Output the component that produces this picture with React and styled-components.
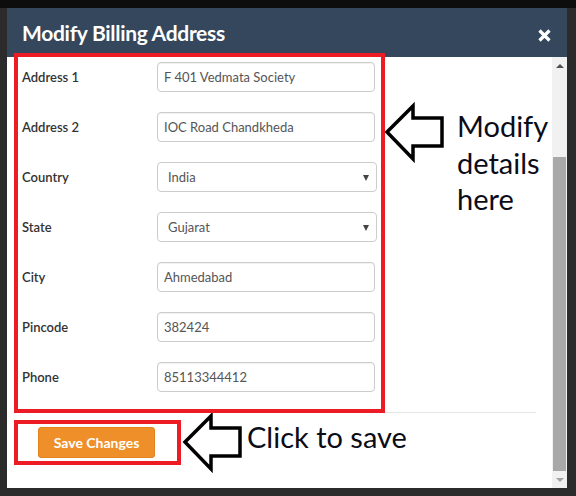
import styled, { createGlobalStyle } from 'styled-components';

const GlobalStyle = createGlobalStyle`
  html, body {
    margin: 0;
    padding: 0;
    background: #2b2b2b;
  }
  * {
    box-sizing: border-box;
  }
`;

const Screen = styled.div`
  position: relative;
  width: 576px;
  height: 496px;
  background: #2b2b2b;
  border-top: 8px solid #0d0d0d;
  padding-left: 7px;
  font-family: Lato, "Open Sans", sans-serif;
  overflow: hidden;
`;

const Modal = styled.div`
  width: 560px;
  height: 480px;
  display: flex;
  flex-direction: column;
  background: #fff;
`;

const Header = styled.div`
  height: 49px;
  flex: none;
  display: flex;
  align-items: center;
  justify-content: space-between;
  padding: 0 16px 0 15px;
  background: #34475c;
`;

const Title = styled.h4`
  margin: 0;
  color: #fff;
  font-size: 21px;
  font-weight: 700;
  letter-spacing: -0.3px;
`;

const CloseButton = styled.button`
  display: flex;
  padding: 0;
  margin-top: 6px;
  border: none;
  background: none;
  cursor: pointer;
`;

const Body = styled.div`
  flex: 1;
  display: flex;
  min-height: 0;
`;

const Content = styled.div`
  flex: 1;
  padding: 0 16px 0 7px;
`;

const FieldsBox = styled.div`
  position: relative;
  z-index: 1;
  width: 371px;
  margin-top: -4px;
  border: 4px solid #ed1c24;
  padding: 5px 6px 17px 4px;
  display: flex;
  flex-direction: column;
  gap: 20px;
`;

const Row = styled.div`
  display: grid;
  grid-template-columns: 135px 1fr;
  align-items: center;
`;

const Label = styled.label`
  color: #333;
  font-size: 13px;
  font-weight: 600;
`;

const Input = styled.input`
  width: 218px;
  height: 30px;
  padding: 0 6px;
  border: 1px solid #ccc;
  border-radius: 4px;
  box-shadow: inset 0 1px 1px rgba(0, 0, 0, 0.06);
  font-family: Lato, sans-serif;
  font-size: 13px;
  color: #555;
  background: #fff;
  outline: none;
`;

const SelectWrap = styled.div`
  position: relative;
  width: 220px;

  &::after {
    content: '';
    position: absolute;
    right: 8px;
    top: 13px;
    border-left: 3.5px solid transparent;
    border-right: 3.5px solid transparent;
    border-top: 6px solid #444;
    pointer-events: none;
  }
`;

const Select = styled.select`
  width: 100%;
  height: 30px;
  padding: 0 10px;
  border: 1px solid #ccc;
  border-radius: 4px;
  font-family: Lato, sans-serif;
  font-size: 13px;
  color: #555;
  background: #fff;
  appearance: none;
  outline: none;
`;

const Footer = styled.div`
  margin-top: -1px;
  border-top: 1px solid #e5e5e5;
  padding-top: 7px;
`;

const SaveBox = styled.div`
  width: 167px;
  height: 45px;
  border: 4px solid #ed1c24;
  padding: 3px 0 0 20px;
`;

const SaveButton = styled.button`
  width: 117px;
  height: 31px;
  padding: 0;
  border: 1px solid #e2821c;
  border-radius: 3px;
  background: #ef8f2a;
  color: #fff;
  font-family: Lato, sans-serif;
  font-size: 14px;
  font-weight: 700;
  cursor: pointer;
`;

const Scrollbar = styled.div`
  width: 15px;
  flex: none;
  display: flex;
  flex-direction: column;
  background: #f1f1f1;
`;

const ScrollArrow = styled.div`
  height: 17px;
  display: flex;
  align-items: center;
  justify-content: center;

  &::before {
    content: '';
    border-left: 4px solid transparent;
    border-right: 4px solid transparent;
    ${({ $dir, $muted }) =>
      $dir === 'up'
        ? `border-bottom: 4px solid ${$muted ? '#a3a3a3' : '#505050'};`
        : `border-top: 4px solid ${$muted ? '#a3a3a3' : '#505050'};`}
  }
`;

const Track = styled.div`
  flex: 1;
  display: flex;
  padding: 83px 1px 0;
`;

const Thumb = styled.div`
  flex: 1;
  background: #a8a8a8;
`;

const Callout = styled.svg`
  position: absolute;
  overflow: visible;
`;

const Note = styled.div`
  position: absolute;
  color: #0c0c18;
  font-family: Lato, "Open Sans", sans-serif;
  font-size: 29px;
  line-height: 36.5px;
  white-space: nowrap;
`;

const fields = [
  { label: 'Address 1', value: 'F 401 Vedmata Society' },
  { label: 'Address 2', value: 'IOC Road Chandkheda' },
  { label: 'Country', value: 'India', options: ['India'] },
  { label: 'State', value: 'Gujarat', options: ['Gujarat'] },
  { label: 'City', value: 'Ahmedabad' },
  { label: 'Pincode', value: '382424' },
  { label: 'Phone', value: '85113344412' },
];

const ArrowShape = ({ left, top }) => (
  <Callout
    width="60"
    height="58"
    viewBox="0 0 60 58"
    style={{ left, top }}
  >
    <polygon
      points="2,28 28,2 28,14 57,14 57,42 28,42 28,55"
      fill="#fff"
      stroke="#000"
      strokeWidth="3.5"
      strokeLinejoin="miter"
    />
  </Callout>
);

const CloseIcon = () => (
  <svg width="13" height="13" viewBox="0 0 13 13">
    <path d="M1.5 1.5 L11.5 11.5 M11.5 1.5 L1.5 11.5" stroke="#fff" strokeWidth="3.2" />
  </svg>
);

const App = () => (
  <>
    <GlobalStyle />
    <Screen>
      <Modal>
        <Header>
          <Title>Modify Billing Address</Title>
          <CloseButton aria-label="Close">
            <CloseIcon />
          </CloseButton>
        </Header>
        <Body>
          <Content>
            <FieldsBox>
              {fields.map((f) => (
                <Row key={f.label}>
                  <Label>{f.label}</Label>
                  {f.options ? (
                    <SelectWrap>
                      <Select defaultValue={f.value}>
                        {f.options.map((o) => (
                          <option key={o}>{o}</option>
                        ))}
                      </Select>
                    </SelectWrap>
                  ) : (
                    <Input type="text" defaultValue={f.value} />
                  )}
                </Row>
              ))}
            </FieldsBox>
            <Footer>
              <SaveBox>
                <SaveButton type="button">Save Changes</SaveButton>
              </SaveBox>
            </Footer>
          </Content>
          <Scrollbar>
            <ScrollArrow $dir="up" />
            <Track>
              <Thumb />
            </Track>
            <ScrollArrow $dir="down" $muted />
          </Scrollbar>
        </Body>
      </Modal>

      <ArrowShape left={385} top={96} />
      <Note style={{ left: 457, top: 100 }}>
        Modify
        <br />
        details
        <br />
        here
      </Note>
      <ArrowShape left={183} top={406} />
      <Note style={{ left: 247, top: 411 }}>Click to save</Note>
    </Screen>
  </>
);

export default App;
